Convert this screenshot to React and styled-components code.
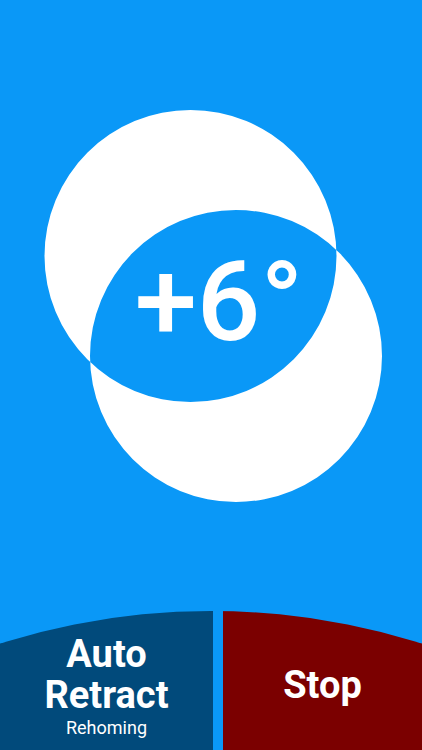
import React from "react";
import styled, { createGlobalStyle } from "styled-components";

const GlobalStyle = createGlobalStyle`
  html, body {
    margin: 0;
    padding: 0;
    background: #0a98f7;
    font-family: Roboto, "Liberation Sans", sans-serif;
  }
`;

const Screen = styled.div`
  width: 100%;
  height: 100vh;
  display: flex;
  flex-direction: column;
  background: #0a98f7;
  overflow: hidden;
`;

const Main = styled.div`
  flex: 1;
  display: flex;
  align-items: center;
  justify-content: center;
`;

const Gauge = styled.div`
  position: relative;
  width: 338px;
  height: 392px;
  margin-left: 4px;
`;

const Reading = styled.div`
  position: absolute;
  inset: 0;
  display: flex;
  align-items: center;
  justify-content: center;
  padding-left: 12px;
  padding-bottom: 8px;
  color: #fff;
  font-size: 112px;
  font-weight: 500;
  line-height: 1;
`;

const Footer = styled.div`
  height: 139px;
  display: flex;
  gap: 10px;
  clip-path: circle(700px at 50% 700px);
`;

const Button = styled.button`
  flex: ${(p) => (p.wide ? "0 0 213px" : "1")};
  border: none;
  margin: 0;
  padding: 9px 0 0;
  display: flex;
  flex-direction: column;
  align-items: center;
  justify-content: center;
  background: ${(p) => p.bg};
  color: #fff;
  font-family: Roboto, "Liberation Sans", sans-serif;
  cursor: pointer;
`;

const Label = styled.span`
  font-size: 38px;
  font-weight: 700;
  line-height: 41px;
`;

const Sub = styled.span`
  font-size: 18px;
  font-weight: 400;
  line-height: 18px;
  margin-top: 3px;
`;

const Circles = () => (
  <svg width="338" height="392" viewBox="0 0 338 392">
    <path
      fill="#fff"
      fillRule="evenodd"
      d="M0.5 146a146 146 0 1 0 292 0a146 146 0 1 0 -292 0Z M46 246a146 146 0 1 0 292 0a146 146 0 1 0 -292 0Z"
    />
  </svg>
);

const App = () => {
  const angle = 6;

  return (
    <Screen>
      <GlobalStyle />
      <Main>
        <Gauge>
          <Circles />
          <Reading>{angle > 0 ? `+${angle}°` : `${angle}°`}</Reading>
        </Gauge>
      </Main>
      <Footer>
        <Button wide bg="#014a7b">
          <Label>Auto</Label>
          <Label>Retract</Label>
          <Sub>Rehoming</Sub>
        </Button>
        <Button bg="#7b0000">
          <Label>Stop</Label>
        </Button>
      </Footer>
    </Screen>
  );
};

export default App;
